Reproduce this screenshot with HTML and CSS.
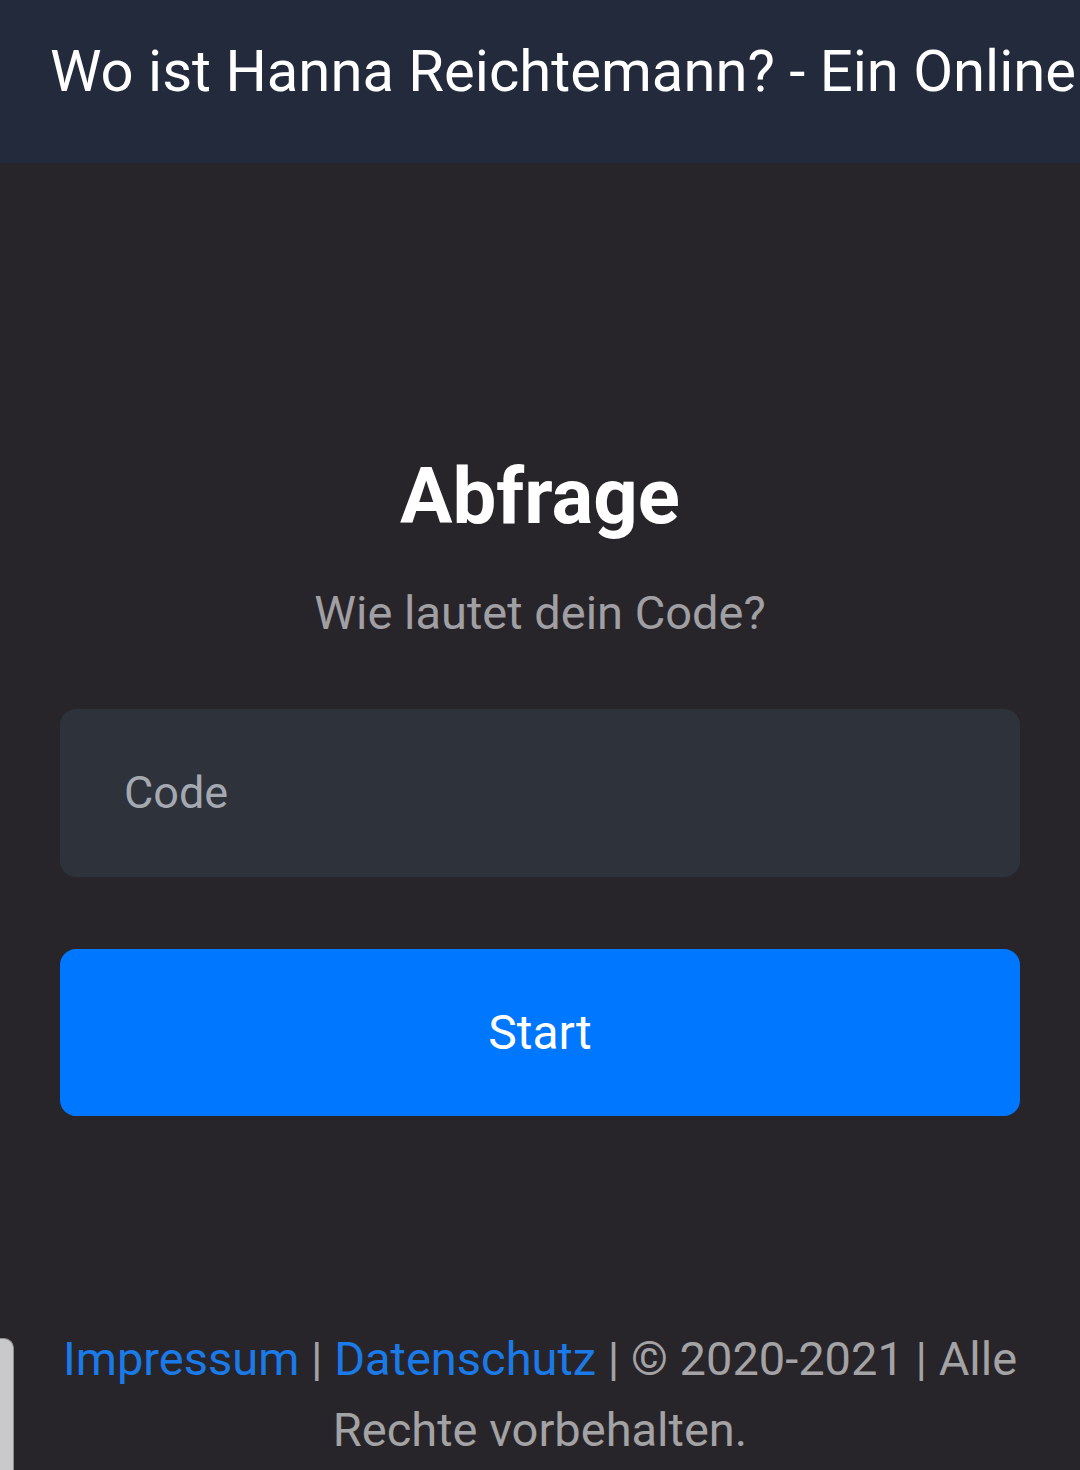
FILE: index.html
```html
<!DOCTYPE html>
<html lang="de">
<head>
    <meta charset="UTF-8">
    <meta name="viewport" content="width=device-width, initial-scale=1.0">
    <title>Abfrage</title>
    <link rel="stylesheet" href="styles.css">
</head>
<body>
    <header class="topbar">
        <h1 class="site-title">Wo ist Hanna Reichtemann? - Ein Online</h1>
    </header>

    <main class="container">
        <h2 class="heading">Abfrage</h2>
        <p class="lead">Wie lautet dein Code?</p>
        <form class="code-form" action="/start" method="post">
            <input type="text" class="code-input" name="code" placeholder="Code">
            <button type="submit" class="start-btn">Start</button>
        </form>

        <footer class="footer">
            <a href="/impressum">Impressum</a> | <a href="/datenschutz">Datenschutz</a> | &copy; 2020-2021 | Alle Rechte vorbehalten.
        </footer>
    </main>

    <div class="side-tab"></div>
</body>
</html>
```

FILE: styles.css
```css
body {
    font-family: Roboto, "Liberation Sans", sans-serif;
    margin: 0;
    padding: 0;
    background-color: #28252a;
    color: #fff;
    min-height: 1470px;
}

.topbar {
    height: 163px;
    box-sizing: border-box;
    padding-top: 37px;
    background-color: #232a3b;
    overflow: hidden;
}

.site-title {
    margin: 0 0 0 50px;
    font-size: 58px;
    font-weight: 400;
    white-space: nowrap;
    line-height: 1.2;
}

.container {
    padding: 287px 60px 0;
}

.heading {
    margin: 0;
    text-align: center;
    font-size: 78px;
    font-weight: 700;
    line-height: 1.2;
}

.lead {
    margin: 41px 0 0;
    text-align: center;
    font-size: 47px;
    line-height: 1.2;
    color: #a09fa3;
}

.code-form {
    margin-top: 68px;
}

.code-input {
    display: block;
    width: 100%;
    height: 168px;
    box-sizing: border-box;
    padding: 0 64px;
    border: none;
    border-radius: 16px;
    background-color: #2e323b;
    color: #fff;
    font-family: inherit;
    font-size: 45px;
    outline: none;
}

.code-input::placeholder {
    color: #a4a8b0;
}

.start-btn {
    display: block;
    width: 100%;
    height: 167px;
    margin-top: 72px;
    border: none;
    border-radius: 16px;
    background-color: #0077ff;
    color: #fff;
    font-family: inherit;
    font-size: 48px;
    cursor: pointer;
}

.footer {
    margin-top: 207px;
    text-align: center;
    font-size: 47px;
    line-height: 71px;
    color: #a3a2a5;
}

.footer a {
    color: #1a7ae8;
    text-decoration: none;
}

.side-tab {
    position: absolute;
    left: 0;
    top: 1338px;
    width: 13px;
    height: 140px;
    background-color: #c9c9c9;
    border: 1px solid #8c8c8c;
    border-left: none;
    border-radius: 0 10px 0 0;
}
```
